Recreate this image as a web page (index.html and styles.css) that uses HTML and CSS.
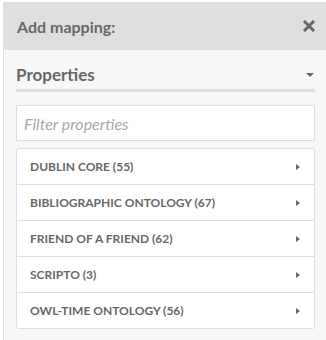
FILE: index.html
```html
<!DOCTYPE html>
<html>
<head>
    <title>Add mapping</title>
    <link rel="stylesheet" href="styles.css">
</head>
<body>
    <div class="sidebar">
        <div class="sidebar-header">
            <h3>Add mapping:</h3>
            <button class="close-btn" aria-label="Close">
                <svg width="12" height="12" viewBox="0 0 12 12">
                    <path d="M2 2 L10 10 M10 2 L2 10" stroke="#676767" stroke-width="3" stroke-linecap="square"/>
                </svg>
            </button>
        </div>

        <div class="sidebar-body">
            <div class="section-title">
                <h4>Properties</h4>
                <span class="caret-down"></span>
            </div>

            <input type="text" class="filter" placeholder="Filter properties">

            <ul class="vocab-list">
                <li><span>Dublin Core (55)</span><span class="caret-right"></span></li>
                <li><span>Bibliographic Ontology (67)</span><span class="caret-right"></span></li>
                <li><span>Friend of a Friend (62)</span><span class="caret-right"></span></li>
                <li><span>Scripto (3)</span><span class="caret-right"></span></li>
                <li><span>OWL-Time Ontology (56)</span><span class="caret-right"></span></li>
            </ul>
        </div>
    </div>
</body>
</html>
```

FILE: styles.css
```css
html, body {
    margin: 0;
    height: 100%;
}

body {
    font-family: Lato, "Open Sans", sans-serif;
    background: #fff;
    color: #676767;
    padding: 2px 0 0 3px;
    box-sizing: border-box;
}

.sidebar {
    background-color: #f7f7f7;
    border-left: 1px solid #dedede;
    height: 100%;
}

.sidebar-header {
    background-color: #dfdfdf;
    height: 48px;
    display: flex;
    align-items: center;
    justify-content: space-between;
    padding: 0 11px 0 13px;
}

.sidebar-header h3 {
    margin: 0;
    font-size: 16px;
    font-weight: 700;
}

.close-btn {
    background: none;
    border: none;
    padding: 0;
    display: flex;
    cursor: pointer;
}

.sidebar-body {
    padding: 12px 11px 0 12px;
}

.section-title {
    display: flex;
    align-items: center;
    justify-content: space-between;
    border-bottom: 3px solid #dfdfdf;
    padding: 2px 1px 4px 0;
}

.section-title h4 {
    margin: 0;
    font-size: 17px;
    font-weight: 700;
}

.caret-down {
    width: 0;
    height: 0;
    border-left: 4px solid transparent;
    border-right: 4px solid transparent;
    border-top: 4px solid #676767;
}

.filter {
    display: block;
    width: 100%;
    box-sizing: border-box;
    height: 36px;
    margin-top: 13px;
    padding: 0 7px;
    border: 1px solid #dedede;
    background: #fff;
    font-family: Lato, sans-serif;
    font-size: 16px;
    color: #676767;
}

.filter::placeholder {
    color: #a8a8a8;
    font-style: italic;
}

.vocab-list {
    list-style: none;
    margin: 7px 0 0;
    padding: 0;
    background: #fff;
    border: 1px solid #dedede;
    border-radius: 3px;
}

.vocab-list li {
    display: flex;
    align-items: center;
    justify-content: space-between;
    height: 35px;
    padding: 0 14px 0 13px;
    border-top: 1px solid #dedede;
    font-size: 12px;
    font-weight: 700;
    text-transform: uppercase;
}

.vocab-list li:first-child {
    border-top: none;
}

.caret-right {
    width: 0;
    height: 0;
    border-top: 3px solid transparent;
    border-bottom: 3px solid transparent;
    border-left: 4px solid #676767;
}
```
